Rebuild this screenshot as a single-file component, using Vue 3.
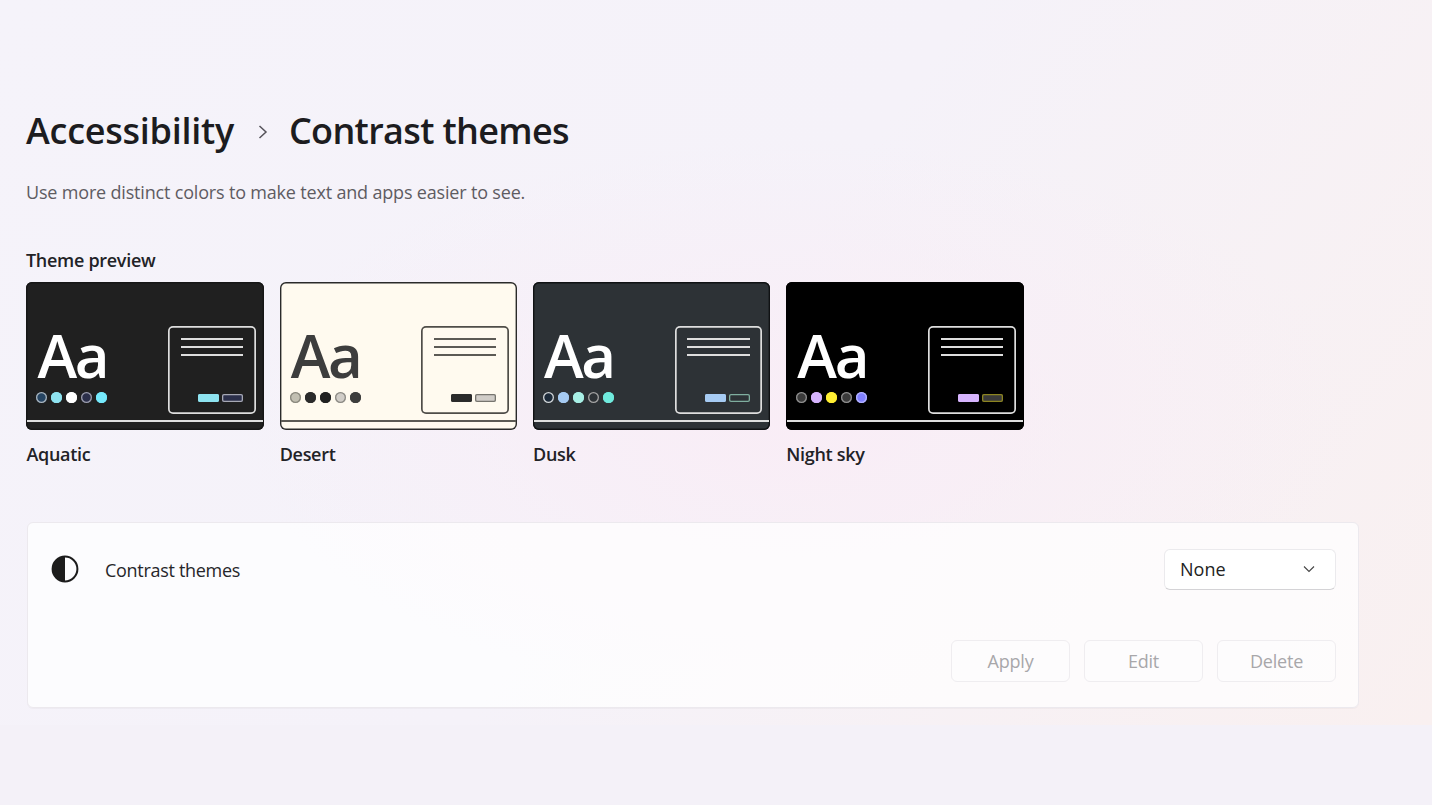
<script setup>
const themes = [
  { name: 'Aquatic', bg: '#202020', edge: '#161616', aa: '#ffffff', line: '#dedede', frame: '#dedede',
    dots: [['#264563', '#a9b4bd'], ['#8ee3f0', '#8ee3f0'], ['#ffffff', '#ffffff'], ['#2b2f4a', '#9a9cab'], ['#75e9fc', '#75e9fc']],
    b1: ['#8ee3f0', '#8ee3f0'], b2: ['#2b2f4a', '#a6a8b4'] },
  { name: 'Desert', bg: '#fffaef', edge: '#2a2a2a', aa: '#3d3d3d', line: '#5c5a54', frame: '#4f4d48',
    dots: [['#c2bfb2', '#8a887e'], ['#2b2b2b', '#2b2b2b'], ['#202020', '#202020'], ['#d1cdc8', '#8c8a84'], ['#3d3d3d', '#3d3d3d']],
    b1: ['#2b2b2b', '#2b2b2b'], b2: ['#d1cdc8', '#77756f'] },
  { name: 'Dusk', bg: '#2d3236', edge: '#101214', aa: '#ffffff', line: '#dedede', frame: '#dedede',
    dots: [['#1d2b3a', '#d0d4d6'], ['#a6cbf3', '#a6cbf3'], ['#a8f0e6', '#a8f0e6'], ['#2d3236', '#a3a3a3'], ['#70ebde', '#70ebde']],
    b1: ['#a6cbf3', '#a6cbf3'], b2: ['#2d3236', '#7fae9f'] },
  { name: 'Night sky', bg: '#000000', edge: '#000000', aa: '#ffffff', line: '#dedede', frame: '#dedede',
    dots: [['#3a3a3a', '#8e8e8e'], ['#d6b4fd', '#d6b4fd'], ['#ffee32', '#ffee32'], ['#3a3a3a', '#8e8e8e'], ['#8080ff', '#b4b4ff']],
    b1: ['#d6b4fd', '#d6b4fd'], b2: ['#3a3a3a', '#8c8420'] }
]
</script>

<template>
  <div class="page">
    <h1 class="title">
      <span class="t1">Accessibility</span>
      <svg class="crumb" width="10" height="14" viewBox="0 0 10 14"><path d="M1.5 1 L8 7 L1.5 13" fill="none" stroke="#55535a" stroke-width="1.5" /></svg>
      <span class="t2">Contrast themes</span>
    </h1>
    <p class="sub">Use more distinct colors to make text and apps easier to see.</p>
    <h2 class="label">Theme preview</h2>
    <div class="themes">
      <div v-for="t in themes" :key="t.name" class="theme">
        <div class="preview" :style="{ background: t.bg, '--edge': t.edge }">
          <div class="left">
            <div class="aa" :style="{ color: t.aa }">Aa</div>
            <div class="dots">
              <span v-for="(d, i) in t.dots" :key="i" class="dot" :style="{ background: d[0], '--ring': d[1] }"></span>
            </div>
          </div>
          <div class="frame" :style="{ '--ring': t.frame }">
            <div class="lines">
              <i v-for="n in 3" :key="n" :style="{ background: t.line }"></i>
            </div>
            <div class="btns">
              <b :style="{ background: t.b1[0], '--ring': t.b1[1] }"></b>
              <b :style="{ background: t.b2[0], '--ring': t.b2[1] }"></b>
            </div>
          </div>
          <div class="rule" :style="{ background: t.line }"></div>
        </div>
        <div class="name">{{ t.name }}</div>
      </div>
    </div>
    <section class="card">
      <div class="row">
        <svg class="icon" width="28" height="28" viewBox="0 0 28 28">
          <circle cx="14" cy="14" r="12.4" fill="none" stroke="#1c1c1c" stroke-width="2" />
          <path d="M14 1.6 A12.4 12.4 0 0 0 14 26.4 Z" fill="#1c1c1c" />
        </svg>
        <span class="row-label">Contrast themes</span>
        <div class="select">
          <span>None</span>
          <svg width="12" height="8" viewBox="0 0 12 8"><path d="M1 1.5 L6 6.5 L11 1.5" fill="none" stroke="#444" stroke-width="1.1" /></svg>
        </div>
      </div>
      <div class="actions">
        <button class="btn" disabled>Apply</button>
        <button class="btn" disabled>Edit</button>
        <button class="btn" disabled>Delete</button>
      </div>
    </section>
  </div>
</template>

<style>
html, body { margin: 0; }
</style>

<style scoped>
.page {
  width: 1432px;
  height: 805px;
  box-sizing: border-box;
  padding: 107px 0 0 26px;
  overflow: hidden;
  font-family: "Open Sans", "Noto Sans", sans-serif;
  color: #1b1b1f;
  background-color: #f4f1f8;
  background-image:
    radial-gradient(ellipse 560px 280px at 800px 420px, #f9edf6 0%, rgba(249, 237, 246, 0) 100%),
    linear-gradient(125deg, #f5f3fa 0%, #f5f2f9 50%, #f9f0f0 100%);
  background-size: 100% 725px;
  background-repeat: no-repeat;
}
.title {
  margin: 0;
  display: flex;
  align-items: center;
  font-size: 36px;
  font-weight: 600;
  line-height: 48px;
  color: #1c1c20;
}
.t1 { letter-spacing: -0.27px; }
.t2 { letter-spacing: -0.66px; }
.crumb { margin: 2px 21px 0 24px; }
.sub {
  margin: 24px 0 0;
  font-size: 18px;
  line-height: 26px;
  color: #5e5c62;
  letter-spacing: -0.18px;
}
.label {
  margin: 43px 0 0;
  font-size: 18px;
  line-height: 24px;
  font-weight: 600;
  color: #222226;
  letter-spacing: -0.3px;
}
.themes {
  display: flex;
  gap: 16px;
  margin: 10px 0 0 0.4px;
}
.theme { width: 237.3px; }
.preview {
  position: relative;
  height: 148px;
  box-sizing: border-box;
  box-shadow: inset 0 0 0 1.4px var(--edge);
  border-radius: 6px;
  display: flex;
  justify-content: space-between;
  padding: 44px 8px 0 10px;
}
.aa {
  font-size: 60px;
  line-height: 59px;
  height: 66px;
  font-weight: 600;
  letter-spacing: -2.3px;
  margin-left: 1px;
}
.dots {
  display: flex;
  gap: 4px;
}
.dot {
  width: 11px;
  height: 11px;
  box-shadow: inset 0 0 0 1.3px var(--ring);
  border-radius: 50%;
}
.frame {
  width: 87.5px;
  height: 87.5px;
  box-sizing: border-box;
  box-shadow: inset 0 0 0 1.7px var(--ring);
  border-radius: 5px;
  padding: 12px 12.5px 11.5px;
  display: flex;
  flex-direction: column;
  justify-content: space-between;
}
.lines { display: flex; flex-direction: column; gap: 6px; }
.lines i { display: block; height: 2px; }
.btns { display: flex; justify-content: flex-end; gap: 3px; }
.btns b {
  display: block;
  width: 21px;
  height: 8px;
  box-shadow: inset 0 0 0 1.3px var(--ring);
  border-radius: 2px;
}
.rule {
  position: absolute;
  left: 1px;
  right: 1px;
  bottom: 8px;
  height: 2px;
}
.name {
  margin-top: 12px;
  font-size: 18px;
  line-height: 24px;
  font-weight: 600;
  color: #222226;
  letter-spacing: -0.3px;
}
.card {
  width: 1332px;
  height: 186px;
  box-sizing: border-box;
  margin: 56px 0 0 1px;
  border: 1px solid #ece9ee;
  border-radius: 6px;
  background: rgba(255, 255, 255, 0.72);
  box-shadow: 0 1px 1px rgba(0, 0, 0, 0.03);
  padding: 25px 22px 0 23px;
}
.row {
  display: flex;
  align-items: center;
  height: 42px;
}
.icon { flex: none; }
.row-label {
  margin: 2px 0 0 26px;
  font-size: 18px;
  color: #26262a;
  letter-spacing: -0.3px;
}
.select {
  margin-left: auto;
  width: 172px;
  height: 41px;
  box-sizing: border-box;
  display: flex;
  align-items: center;
  justify-content: space-between;
  padding: 0 20px 0 15px;
  background: #fff;
  border: 1px solid #ebeaed;
  border-bottom-color: #d4d3d6;
  border-radius: 6px;
  font-size: 18px;
  color: #222;
}
.actions {
  display: flex;
  justify-content: flex-end;
  gap: 14px;
  margin-top: 50px;
}
.btn {
  width: 119px;
  height: 42px;
  box-sizing: border-box;
  border: 1px solid #efedf0;
  border-radius: 6px;
  background: rgba(255, 255, 255, 0.3);
  font: inherit;
  font-size: 18px;
  letter-spacing: -0.2px;
  color: #a8a7aa;
}
</style>
